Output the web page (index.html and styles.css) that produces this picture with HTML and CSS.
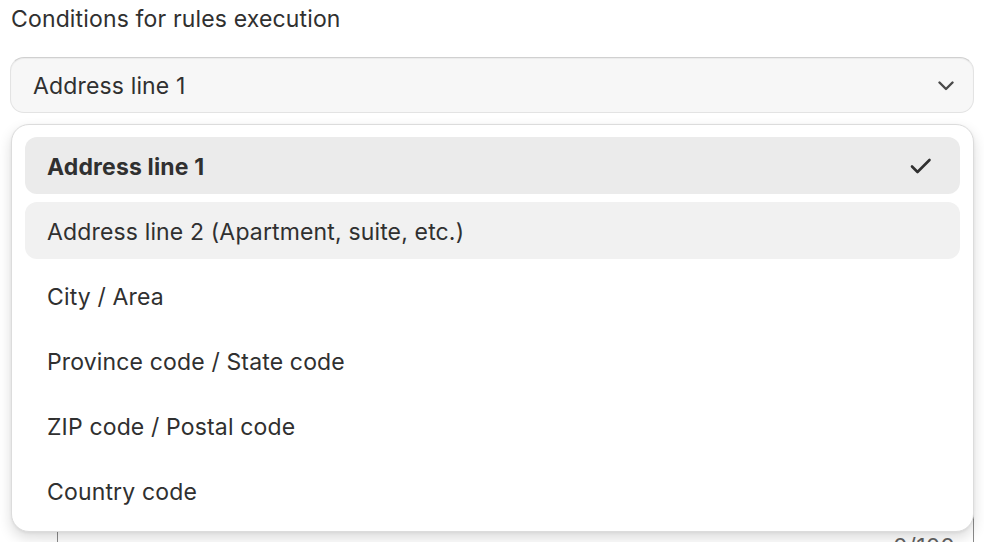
FILE: index.html
```html
<!DOCTYPE html>
<html>
<head>
<meta charset="utf-8">
<link rel="stylesheet" href="styles.css">
</head>
<body>
<div class="page">
  <div class="label">Conditions for rules execution</div>
  <div class="select-wrap">
    <div class="select">
      <span class="select-text">Address line 1</span>
      <svg class="chevron" width="16" height="10" viewBox="0 0 16 10"><path d="M1.5 1.5 L8 8 L14.5 1.5" fill="none" stroke="#4a4a4a" stroke-width="2.4" stroke-linecap="round" stroke-linejoin="round"/></svg>
    </div>
    <div class="popover">
      <div class="option selected">
        <span>Address line 1</span>
        <svg class="check" width="22" height="18" viewBox="0 0 22 18"><path d="M2 9.5 L7.5 15 L19.5 3" fill="none" stroke="#303030" stroke-width="2.6" stroke-linecap="round" stroke-linejoin="round"/></svg>
      </div>
      <div class="option hover"><span>Address line 2 (Apartment, suite, etc.)</span></div>
      <div class="option"><span>City / Area</span></div>
      <div class="option"><span>Province code / State code</span></div>
      <div class="option"><span>ZIP code / Postal code</span></div>
      <div class="option"><span>Country code</span></div>
    </div>
  </div>
  <div class="textarea">
    <div class="textarea-body"></div>
    <div class="counter">0/100</div>
  </div>
</div>
</body>
</html>
```

FILE: styles.css
```css
html, body {
  margin: 0;
  padding: 0;
  background: #ffffff;
}
body {
  font-family: Inter, "Noto Sans", "Liberation Sans", sans-serif;
  color: #303030;
  font-size: 23px;
  letter-spacing: 0.15px;
  overflow: hidden;
  height: 542px;
}
.page {
  padding: 0 10px 0 10px;
}
.label {
  line-height: 36px;
  padding: 1px 0 0 1px;
  margin-bottom: 20px;
}
.select-wrap {
  position: relative;
}
.select {
  height: 56px;
  box-sizing: border-box;
  border: 1px solid #e3e3e3;
  border-top-color: #d0d0d0;
  border-radius: 14px;
  background: #f7f7f7;
  box-shadow: inset 0 1px 1px rgba(0,0,0,0.05);
  display: flex;
  align-items: center;
  justify-content: space-between;
  padding: 2px 19px 0 22px;
}
.select-text {
  line-height: 30px;
}
.chevron {
  display: block;
}
.popover {
  position: absolute;
  top: 67px;
  left: 1px;
  right: 0;
  background: #ffffff;
  border: 1px solid #dcdcdc;
  border-radius: 18px;
  box-shadow: 0 6px 14px rgba(0,0,0,0.14), 0 1px 3px rgba(0,0,0,0.06);
  padding: 12px 13px;
  display: flex;
  flex-direction: column;
  gap: 8px;
  z-index: 2;
}
.option {
  height: 57px;
  border-radius: 12px;
  display: flex;
  align-items: center;
  justify-content: space-between;
  padding: 2px 28px 0 22px;
  box-sizing: border-box;
}
.option.selected {
  background: #ebebeb;
  font-weight: 700;
}
.option.hover {
  background: #f1f1f1;
}
.check {
  display: block;
  margin-top: -2px;
}
.textarea {
  margin: 40px 0 0 47px;
  border-left: 1px solid #8a8a8a;
  border-right: 1px solid #8a8a8a;
  display: flex;
  flex-direction: column;
}
.textarea-body {
  height: 379px;
}
.counter {
  text-align: right;
  padding-right: 18px;
  color: #616161;
  line-height: 30px;
}
```
